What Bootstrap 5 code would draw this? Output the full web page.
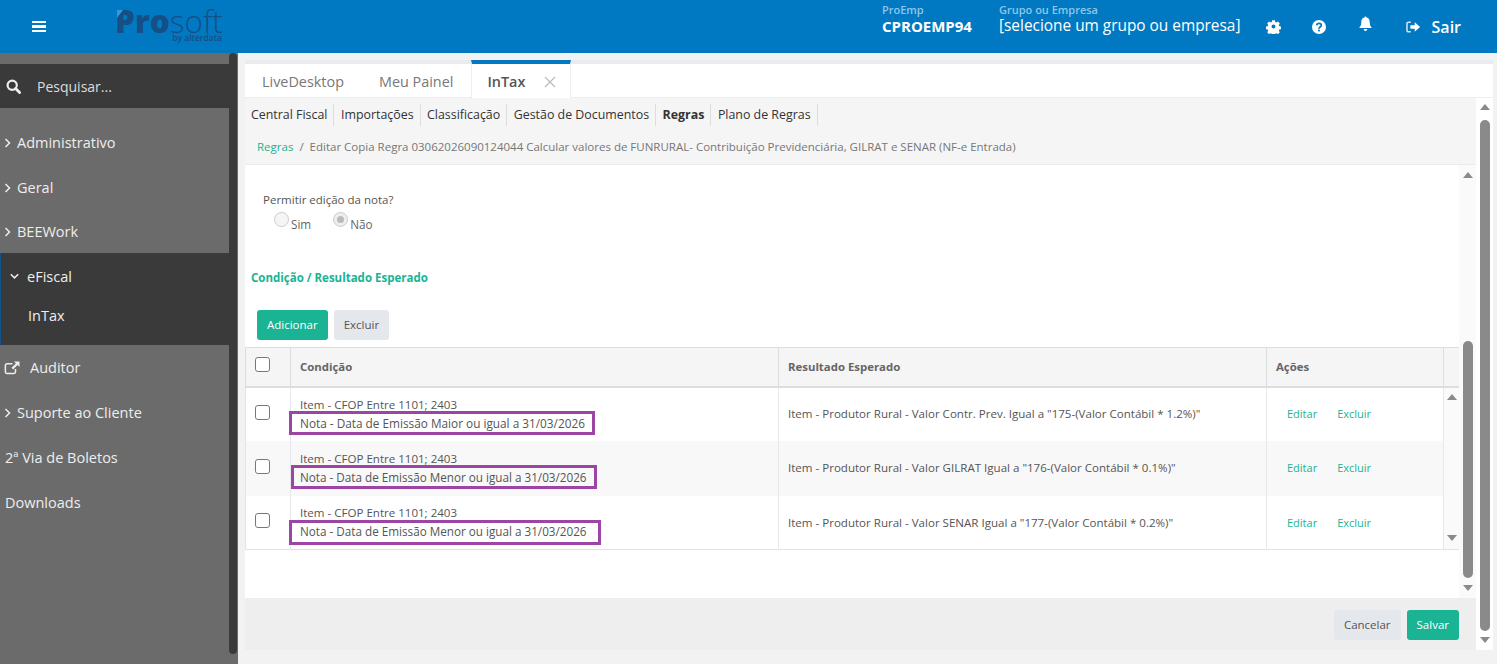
<!DOCTYPE html>
<html lang="pt-BR">
<head>
    <meta charset="UTF-8">
    <meta name="viewport" content="width=device-width, initial-scale=1.0">
    <title>InTax - Regras</title>
    <link href="https://cdn.jsdelivr.net/npm/bootstrap@5.3.0/dist/css/bootstrap.min.css" rel="stylesheet">
    <style>
        html, body { height: 100%; overflow: hidden; }
        body { font-family: "Open Sans", "Noto Sans", sans-serif; background: #f2f2f2; color: #555; font-size: 11.7px; }

        /* topo */
        .top-bar { height: 53px; background: #0079c2; color: #fff; flex: none; }
        .burger { width: 14px; margin-left: 32px; }
        .burger span { display: block; height: 2.4px; background: #fff; margin: 2.2px 0; }
        .logo-box { margin-left: 69px; color: #154f86; width: 107px; }
        .logo-word { font-size: 31.5px; margin-top: 9px; line-height: 24px; position: relative; white-space: nowrap; }
        .logo-word::before { content: ""; position: absolute; left: 2px; top: 1px; border-top: 8px solid #2f9ade; border-right: 6px solid transparent; }
        .logo-word b { font-weight: 800; }
        .logo-word span { font-weight: 300; }
        .logo-by { font-size: 8.5px; line-height: 10px; text-align: right; font-weight: 600; }
        .top-right { margin-left: auto; align-self: stretch; }
        .top-label { font-size: 11px; line-height: 12px; color: #8fc6e8; font-weight: 600; padding-top: 4px; }
        .top-val { font-size: 15px; line-height: 20px; }
        .emp-col { width: 117px; align-self: flex-start; }
        .emp-col .top-val { font-weight: 700; }
        .grp-col { width: 251px; align-self: flex-start; }
        .grp-col .top-val { font-size: 15.4px; white-space: nowrap; }
        .top-ico { width: 46px; }
        .top-ico.bell { padding-bottom: 5px; }
        .top-sair { width: 73px; padding-left: 18px; font-size: 16px; font-weight: 600; margin-right: 36px; gap: 11px; }

        /* lateral */
        .side-wrap { width: 238px; flex: none; background: #6b6b6b; }
        .side-menu { width: 229px; background: #6b6b6b; color: #eee; font-size: 14.5px; }
        .search-row { height: 44px; margin-top: 11px; background: #3a3a3a; color: #ddd; padding-left: 6px; gap: 16px; font-size: 14px; }
        .side-item { height: 45px; padding-left: 4px; gap: 6px; }
        .side-item.short { height: 43px; }
        .side-open { height: 92px; background: #3a3a3a; border-left: 1px solid #14528a; }
        .side-open .side-item { height: 46px; padding-left: 9px; gap: 8px; padding-top: 1px; }
        .side-open .sub-item { height: 32px; padding-left: 27px; }
        .side-item.plain { padding-left: 5px; }
        .side-menu-list { padding-top: 12px; }
        .side-thumb { width: 8px; height: 601px; background: #3a3a3a; border-radius: 4px; }

        /* area principal */
        .work { padding: 7px 4px 14px 7px; min-width: 0; }
        .tab-strip { border-top: 4px solid #e9ecef; background: #fff; height: 38px; border-bottom: 1px solid #eee; }
        .tab-link { height: 34px; padding: 2px 18px 0; color: #777; font-size: 14.4px; display: flex; align-items: center; }
        .tab-link.first { padding-left: 17px; padding-right: 17px; }
        .tab-link.on { width: 100px; margin: -4px 0 -1px 0; height: 38px; border-top: 4px solid #0079c2; border-left: 1px solid #eee; border-right: 1px solid #eee; background: #fff; color: #555; font-weight: 600; padding: 2px 0 0 15px; }
        .tab-x { margin-left: 19px; display: flex; }
        .sub-nav { height: 32px; background: #f5f5f5; padding-top: 1px; }
        .sub-nav span { color: #333; font-size: 12.4px; padding: 0 6px; line-height: 22px; border-right: 1px solid #ddd; margin-right: .5px; }
        .sub-nav span.strong { font-weight: 700; }
        .crumb-row { height: 35px; background: #f5f5f5; padding-left: 12px; border-bottom: 1px solid #e9ecef; font-size: 11.5px; color: #777; white-space: nowrap; }
        .crumb-row a { color: #1ab394; text-decoration: none; }
        .crumb-sep { margin: 0 6px; }
        .pane { background: #fff; height: 433px; }
        .pane-body { width: 1214px; flex: none; }
        .q-label { margin: 27px 0 0 18px; line-height: 16px; color: #555; font-size: 11.5px; }
        .radio-line { margin: 6px 0 0 29px; gap: 22px; height: 20px; color: #666; }
        .radio-fake { width: 15px; height: 15px; border-radius: 50%; border: 1px solid #ccc; background: #f5f5f5; display: inline-block; margin-right: 2px; position: relative; top: -2px; }
        .radio-fake.set { background: #eee; }
        .radio-fake.set::after { content: ""; position: absolute; inset: 3px; border-radius: 50%; background: #bbb; }
        .sec-title { color: #1ab394; font-weight: 700; font-size: 11.5px; margin: 35px 0 0 6px; line-height: 18px; }
        .btn-row { margin: 23px 0 7px 12px; gap: 6px; }
        .btn-teal, .btn-teal:hover { background: #1ab394; color: #fff; border: 0; font-size: 11.5px; height: 30px; padding: 0 10px; border-radius: 3px; }
        .btn-soft, .btn-soft:hover { background: #e4e7ec; color: #555; border: 0; font-size: 11.5px; height: 30px; padding: 0 10px; border-radius: 3px; }
        .rule-table { table-layout: fixed; width: 1214px; margin: 0; border-collapse: collapse; font-size: 11.55px; color: #555; border: 1px solid #e3e3e3; border-top-color: #ddd; }
        .rule-table th { background: #f5f5f5; height: 39px; padding: 0 9px; vertical-align: middle; color: #666; font-weight: 700; font-size: 11.4px; border: 1px solid #ddd; border-bottom-width: 2px; }
        .rule-table td { padding: 0 9px; vertical-align: middle; border: 0; border-right: 1px solid #e6e8ee; background: #fff; color: #555; box-shadow: none; }
        .rule-table tr.zebra td { background: #f8f8f8; }
        .rule-table tr.row-a td { height: 54px; }
        .rule-table tr.row-b td { height: 55px; }
        .rule-table .col-chk { width: 45px; padding: 0 0 4px 9px; }
        .rule-table .col-cond { width: 488px; }
        .rule-table .col-res { width: 488px; }
        .rule-table .col-act { width: 177px; }
        .rule-table .col-rail { width: 16px; padding: 0; }
        .rule-table td.rail-cell { background: #fafafa; border-right: 0; padding: 6px 0 8px; }
        .rule-table td.chk-cell { padding: 0 0 4px 9px; }
        .chk-box { width: 15px; height: 15px; margin: 0; border: 1px solid #777; border-radius: 3px; display: block; }
        .cond-line { line-height: 18px; white-space: nowrap; position: relative; }
        .violet { font-size: 11.7px; }
        .violet::after { content: ""; position: absolute; border: 3px solid #9c45a5; top: -3px; bottom: -3px; }
        .violet.v1 { font-size: 11.8px; }
        .violet.v1::after { left: -11px; width: 306px; }
        .violet.v2::after { left: -9px; width: 306px; }
        .violet.v3::after { left: -11px; width: 312px; top: -2px; bottom: -5px; }
        .act-link { color: #1ab394; text-decoration: none; font-size: 11px; margin-left: 11px; margin-right: 20px; }
        .act-link + .act-link { margin-left: 0; }
        .pane-foot { height: 52px; background: #eee; padding: 2px 17px 0 0; gap: 6px; }
        .arrow-up { width: 0; height: 0; border-left: 5px solid transparent; border-right: 5px solid transparent; border-bottom: 6px solid #8a8a8a; }
        .arrow-down { width: 0; height: 0; border-left: 5px solid transparent; border-right: 5px solid transparent; border-top: 6px solid #8a8a8a; }
        .rail-in { width: 17px; background: #fafafa; padding: 7px 0 7px; }
        .thumb-in { width: 10px; height: 237px; margin: 163px 0 7px; background: #8a8a8a; border-radius: 5px; }
        .rail-out { width: 17px; background: #fff; padding: 6px 0 7px; }
        .thumb-out { width: 10px; height: 511px; margin: 10px 0 6px; background: #8a8a8a; border-radius: 5px; }
    </style>
</head>
<body class="d-flex flex-column">

    <!-- Topo -->
    <header class="top-bar d-flex align-items-center">
        <div class="burger"><span></span><span></span><span></span></div>
        <div class="logo-box align-self-start">
            <div class="logo-word"><b>Pro</b><span>soft</span></div>
            <div class="logo-by">by alterdata</div>
        </div>
        <div class="top-right d-flex align-items-center">
            <div class="emp-col">
                <div class="top-label">ProEmp</div>
                <div class="top-val">CPROEMP94</div>
            </div>
            <div class="grp-col">
                <div class="top-label">Grupo ou Empresa</div>
                <div class="top-val">[selecione um grupo ou empresa]</div>
            </div>
            <div class="top-ico d-flex justify-content-center">
                <svg width="15" height="15" viewBox="0 0 15 15"><path fill-rule="evenodd" fill="#fff" d="M6 .5h3l.4 2 1.300.6 1.800-1.100 2 2.100-1.100 1.700.6 1.300 2 .4v3l-2 .4-.6 1.300 1.100 1.700-2 2.100-1.800-1.100-1.300.6-.4 1.900H6l-.4-1.900-1.300-.6-1.800 1.100-2-2.100 1.100-1.700-.6-1.300-2-.4v-3l2-.4.6-1.300L.5 4.100l2-2.100 1.800 1.100 1.300-.6zM7.500 5.300a2.200 2.200 0 1 0 0 4.400 2.200 2.200 0 0 0 0-4.400z" transform="translate(.75 .75) scale(.9)"/></svg>
            </div>
            <div class="top-ico d-flex justify-content-center">
                <svg width="14" height="14" viewBox="0 0 14 14"><circle cx="7" cy="7" r="7" fill="#fff"/><path d="M4.700 5.400C4.900 4 5.900 3.400 7 3.400c1.300 0 2.300.8 2.300 2 0 1.700-2.300 1.600-2.300 3.300" fill="none" stroke="#0079c2" stroke-width="1.700"/><rect x="6.100" y="9.600" width="1.800" height="1.800" fill="#0079c2"/></svg>
            </div>
            <div class="top-ico bell d-flex justify-content-center">
                <svg width="15" height="16" viewBox="0 0 15 16"><path d="M7.500 0.500c.7 0 1 .5 1 1 2.300.4 3.200 2.200 3.200 4.500 0 3.500 1 4.700 2.300 6H1c1.300-1.300 2.300-2.500 2.300-6 0-2.300.9-4.100 3.200-4.500 0-.5.3-1 1-1zM5.700 13h3.600c0 1.100-.8 2-1.800 2s-1.800-.9-1.800-2z" fill="#fff"/></svg>
            </div>
            <div class="top-sair d-flex align-items-center">
                <svg width="15" height="12" viewBox="0 0 15 12"><path d="M5 1H2.500C1.600 1 1 1.600 1 2.500v7c0 .9.6 1.500 1.500 1.500H5" fill="none" stroke="#cfe6f5" stroke-width="1.600"/><path d="M4.500 4.300H9V1l5.500 5L9 11V7.700H4.500z" fill="#fff"/></svg>
                <span>Sair</span>
            </div>
        </div>
    </header>

    <div class="d-flex flex-grow-1">
        <!-- Menu lateral -->
        <aside class="side-wrap d-flex">
            <nav class="side-menu">
                <div class="search-row d-flex align-items-center">
                    <svg width="15" height="15" viewBox="0 0 15 15"><circle cx="6.200" cy="6.200" r="4.600" fill="none" stroke="#eee" stroke-width="2.200"/><path d="M9.600 9.600l4 4" stroke="#eee" stroke-width="2.800" stroke-linecap="round"/></svg>
                    <span>Pesquisar...</span>
                </div>
                <div class="side-menu-list">
                    <div class="side-item d-flex align-items-center"><svg width="7" height="10" viewBox="0 0 7 10"><path d="M1.500 1l4 4-4 4" fill="none" stroke="#eee" stroke-width="1.500"/></svg><span>Administrativo</span></div>
                    <div class="side-item d-flex align-items-center"><svg width="7" height="10" viewBox="0 0 7 10"><path d="M1.500 1l4 4-4 4" fill="none" stroke="#eee" stroke-width="1.500"/></svg><span>Geral</span></div>
                    <div class="side-item short d-flex align-items-center"><svg width="7" height="10" viewBox="0 0 7 10"><path d="M1.500 1l4 4-4 4" fill="none" stroke="#eee" stroke-width="1.500"/></svg><span>BEEWork</span></div>
                    <div class="side-open">
                        <div class="side-item d-flex align-items-center"><svg width="9" height="7" viewBox="0 0 9 7"><path d="M.8 1.200l3.700 3.700 3.700-3.700" fill="none" stroke="#eee" stroke-width="1.500"/></svg><span>eFiscal</span></div>
                        <div class="side-item sub-item d-flex align-items-center"><span>InTax</span></div>
                    </div>
                    <div class="side-item d-flex align-items-center">
                        <svg width="16" height="14" viewBox="0 0 16 14"><path d="M11.500 8v2.800c0 1-.6 1.700-1.600 1.700H3c-1 0-1.600-.7-1.600-1.700V4.500C1.400 3.500 2 2.800 3 2.800h5.500" fill="none" stroke="#eee" stroke-width="1.500"/><path d="M10 .5h5.500V6l-2-2-4.300 4.500-1.700-1.700L11.900 2.400z" fill="#eee"/></svg>
                        <span class="ms-1">Auditor</span>
                    </div>
                    <div class="side-item d-flex align-items-center"><svg width="7" height="10" viewBox="0 0 7 10"><path d="M1.500 1l4 4-4 4" fill="none" stroke="#eee" stroke-width="1.500"/></svg><span>Suporte ao Cliente</span></div>
                    <div class="side-item plain d-flex align-items-center"><span>2ª Via de Boletos</span></div>
                    <div class="side-item plain d-flex align-items-center"><span>Downloads</span></div>
                </div>
            </nav>
            <div class="side-thumb"></div>
        </aside>

        <!-- Conteudo -->
        <main class="work flex-grow-1">
            <div class="tab-strip d-flex">
                <div class="tab-link first">LiveDesktop</div>
                <div class="tab-link">Meu Painel</div>
                <div class="tab-link on">InTax<span class="tab-x"><svg width="12" height="12" viewBox="0 0 12 12"><path d="M1 1l10 10M11 1L1 11" stroke="#bbb" stroke-width="1.200"/></svg></span></div>
            </div>
            <div class="d-flex">
                <div class="flex-grow-1">
                    <div class="sub-nav d-flex align-items-center">
                        <span>Central Fiscal</span>
                        <span>Importações</span>
                        <span>Classificação</span>
                        <span>Gestão de Documentos</span>
                        <span class="strong">Regras</span>
                        <span>Plano de Regras</span>
                    </div>
                    <div class="crumb-row d-flex align-items-center">
                        <a href="#">Regras</a><span class="crumb-sep">/</span>Editar Copia Regra 03062026090124044 Calcular valores de FUNRURAL- Contribuição Previdenciária, GILRAT e SENAR (NF-e Entrada)
                    </div>
                    <div class="pane d-flex">
                        <div class="pane-body">
                            <div class="q-label">Permitir edição da nota?</div>
                            <div class="radio-line d-flex align-items-center">
                                <label><span class="radio-fake"></span>Sim</label>
                                <label><span class="radio-fake set"></span>Não</label>
                            </div>
                            <div class="sec-title">Condição / Resultado Esperado</div>
                            <div class="btn-row d-flex">
                                <button type="button" class="btn btn-teal">Adicionar</button>
                                <button type="button" class="btn btn-soft">Excluir</button>
                            </div>
                            <table class="table rule-table">
                                <thead>
                                    <tr>
                                        <th class="col-chk"><input class="form-check-input chk-box" type="checkbox"></th>
                                        <th class="col-cond">Condição</th>
                                        <th class="col-res">Resultado Esperado</th>
                                        <th class="col-act">Ações</th>
                                        <th class="col-rail"></th>
                                    </tr>
                                </thead>
                                <tbody>
                                    <tr class="row-a">
                                        <td class="chk-cell"><input class="form-check-input chk-box" type="checkbox"></td>
                                        <td><div class="cond-line">Item - CFOP Entre 1101; 2403</div><div class="cond-line violet v1">Nota - Data de Emissão Maior ou igual a 31/03/2026</div></td>
                                        <td>Item - Produtor Rural - Valor Contr. Prev. Igual a "175-(Valor Contábil * 1.2%)"</td>
                                        <td><a class="act-link" href="#">Editar</a><a class="act-link" href="#">Excluir</a></td>
                                        <td class="rail-cell" rowspan="3">
                                            <div class="d-flex flex-column justify-content-between align-items-center h-100">
                                                <div class="arrow-up"></div>
                                                <div class="arrow-down"></div>
                                            </div>
                                        </td>
                                    </tr>
                                    <tr class="row-b zebra">
                                        <td class="chk-cell"><input class="form-check-input chk-box" type="checkbox"></td>
                                        <td><div class="cond-line">Item - CFOP Entre 1101; 2403</div><div class="cond-line violet v2">Nota - Data de Emissão Menor ou igual a 31/03/2026</div></td>
                                        <td>Item - Produtor Rural - Valor GILRAT Igual a "176-(Valor Contábil * 0.1%)"</td>
                                        <td><a class="act-link" href="#">Editar</a><a class="act-link" href="#">Excluir</a></td>
                                    </tr>
                                    <tr class="row-a">
                                        <td class="chk-cell"><input class="form-check-input chk-box" type="checkbox"></td>
                                        <td><div class="cond-line">Item - CFOP Entre 1101; 2403</div><div class="cond-line violet v3">Nota - Data de Emissão Menor ou igual a 31/03/2026</div></td>
                                        <td>Item - Produtor Rural - Valor SENAR Igual a "177-(Valor Contábil * 0.2%)"</td>
                                        <td><a class="act-link" href="#">Editar</a><a class="act-link" href="#">Excluir</a></td>
                                    </tr>
                                </tbody>
                            </table>
                        </div>
                        <div class="rail-in d-flex flex-column align-items-center">
                            <div class="arrow-up"></div>
                            <div class="thumb-in"></div>
                            <div class="arrow-down"></div>
                        </div>
                    </div>
                    <div class="pane-foot d-flex align-items-center justify-content-end">
                        <button type="button" class="btn btn-soft">Cancelar</button>
                        <button type="button" class="btn btn-teal">Salvar</button>
                    </div>
                </div>
                <div class="rail-out d-flex flex-column align-items-center">
                    <div class="arrow-up"></div>
                    <div class="thumb-out"></div>
                    <div class="arrow-down"></div>
                </div>
            </div>
        </main>
    </div>

    <script src="https://cdn.jsdelivr.net/npm/bootstrap@5.3.0/dist/js/bootstrap.bundle.min.js"></script>
</body>
</html>
